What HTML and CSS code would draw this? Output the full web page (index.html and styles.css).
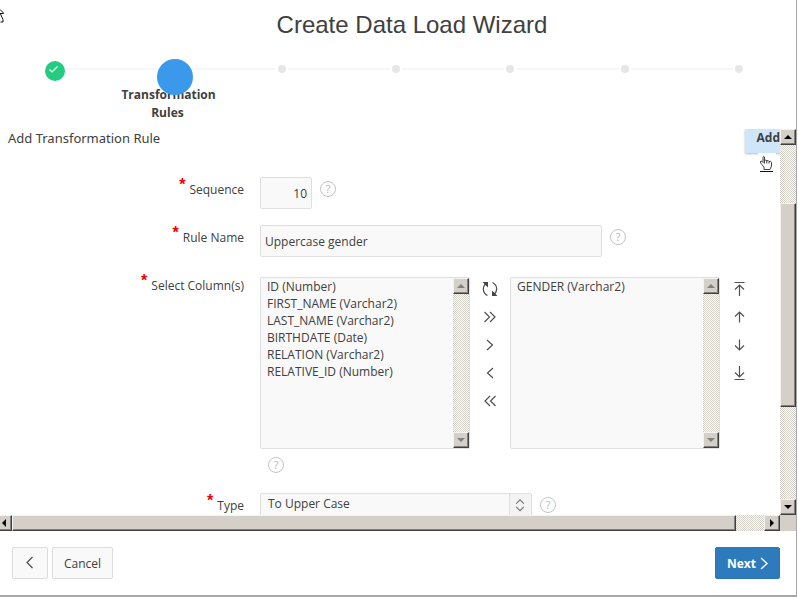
FILE: index.html
```html
<!DOCTYPE html>
<html lang="en">
<head>
<meta charset="utf-8">
<title>Create Data Load Wizard</title>
<link rel="stylesheet" href="styles.css">
</head>
<body>
<svg class="pointer-arrow" width="5" height="16" viewBox="0 0 5 16" fill="none" stroke="#111" aria-hidden="true"><path d="M0 1.5 L3.5 5 V5.5 H0 M0.5 6 L3 11.5 V14 H0.5"/></svg>
<div class="dialog">
  <header class="head">
    <h1>Create Data Load Wizard</h1>
    <ol class="steps">
      <li class="step done"><span class="marker"><svg width="20" height="20" viewBox="0 0 20 20" fill="none" stroke="#fff" stroke-width="1.2"><path d="M4.500 8.500 L7 11 L12.500 5.500"/></svg></span></li>
      <li class="step current"><span class="marker"></span><span class="step-name">Transformation Rules</span></li>
      <li class="step"><span class="marker"></span></li>
      <li class="step"><span class="marker"></span></li>
      <li class="step"><span class="marker"></span></li>
      <li class="step"><span class="marker"></span></li>
      <li class="step"><span class="marker"></span></li>
    </ol>
  </header>

  <main class="pane">
    <div class="content">
      <div class="region-head">
        <h2>Add Transformation Rule</h2>
        <button class="add" type="button">Add</button>
      </div>
      <svg class="pointer-hand" width="18" height="20" viewBox="0 0 18 20" aria-hidden="true"><path fill="#fff" d="M0 0H18V20H0z"/><path fill="#fff" stroke="#444" d="M6 16.500 V14 L3 10.500 Q1.500 8.500 3 8 Q4 8 5 9.500 V4 Q5.700 2.500 6.500 4 V8 Q8 5.800 8.800 8 Q10.200 6.500 11 8.500 Q13 7.500 13.500 9.500 V13 L12 16.500 z M6.500 8 V10.500 M8.800 8 V10.500 M11 8.500 V10.500"/><path stroke="#111" d="M2 18.500 H15"/></svg>
      <form class="form">
        <label class="name" for="seq"><b>*</b>Sequence</label>
        <div class="field">
          <input class="box seq" id="seq" type="text" value="10">
          <button class="help" type="button" aria-label="Help">?</button>
        </div>

        <label class="name" for="rule"><b>*</b>Rule Name</label>
        <div class="field">
          <input class="box rule" id="rule" type="text" value="Uppercase gender">
          <button class="help" type="button" aria-label="Help">?</button>
        </div>

        <label class="name" for="cols"><b>*</b>Select Column(s)</label>
        <div class="field shuttle">
          <div class="list">
            <select id="cols" multiple size="10">
              <option>ID (Number)</option>
              <option>FIRST_NAME (Varchar2)</option>
              <option>LAST_NAME (Varchar2)</option>
              <option>BIRTHDATE (Date)</option>
              <option>RELATION (Varchar2)</option>
              <option>RELATIVE_ID (Number)</option>
            </select>
            <div class="bar vertical disabled"><span class="knob up"></span><span class="track"></span><span class="knob down"></span></div>
          </div>
          <div class="tools">
            <button type="button" aria-label="Reset"><svg viewBox="0 0 16 16"><path d="M5.500 14.500 C0.500 12 0 6 4 2.500 M10.500 1.500 C15.500 4 16 10 12 13.500"/><path class="solid" d="M0.500 1 H6 V6.500z M15.500 15 H10 V9.500z"/></svg></button>
            <button type="button" aria-label="Move all"><svg viewBox="0 0 16 16"><path d="M2.500 3 L7.500 8 L2.500 13 M8 3 L13 8 L8 13"/></svg></button>
            <button type="button" aria-label="Move"><svg viewBox="0 0 16 16"><path d="M5 3 L10.500 8 L5 13"/></svg></button>
            <button type="button" aria-label="Remove"><svg viewBox="0 0 16 16"><path d="M11 3 L5.500 8 L11 13"/></svg></button>
            <button type="button" aria-label="Remove all"><svg viewBox="0 0 16 16"><path d="M8 3 L3 8 L8 13 M13.500 3 L8.500 8 L13.500 13"/></svg></button>
          </div>
          <div class="list">
            <select multiple size="10" aria-label="Selected columns">
              <option>GENDER (Varchar2)</option>
            </select>
            <div class="bar vertical disabled"><span class="knob up"></span><span class="track"></span><span class="knob down"></span></div>
          </div>
          <div class="tools">
            <button type="button" aria-label="Top"><svg viewBox="0 0 16 16"><path d="M2.500 1.500 H12.500 M7.500 15 V4.500 M3 8.500 L7.500 4 L12 8.500"/></svg></button>
            <button type="button" aria-label="Up"><svg viewBox="0 0 16 16"><path d="M7.500 13.500 V3 M3 7.500 L7.500 3 L12 7.500"/></svg></button>
            <button type="button" aria-label="Down"><svg viewBox="0 0 16 16"><path d="M7.500 2.500 V13 M3 8.500 L7.500 13 L12 8.500"/></svg></button>
            <button type="button" aria-label="Bottom"><svg viewBox="0 0 16 16"><path d="M7.500 1 V11.500 M3 7.500 L7.500 12 L12 7.500 M2.500 14.500 H12.500"/></svg></button>
          </div>
          <button class="help below" type="button" aria-label="Help">?</button>
        </div>

        <label class="name type-name" for="type"><b>*</b>Type</label>
        <div class="field type-field">
          <div class="picker">
            <select id="type"><option>To Upper Case</option></select>
            <svg width="22" height="22" viewBox="0 0 22 22" fill="none" stroke="#777" stroke-width="1.200"><path d="M6.500 9.500 L10.500 5.500 L14.500 9.500 M6.500 13 L10.500 17 L14.500 13"/></svg>
          </div>
          <button class="help" type="button" aria-label="Help">?</button>
        </div>
      </form>
    </div>
    <div class="bar vertical"><span class="knob up"></span><span class="track before"></span><span class="thumb"></span><span class="track after"></span><span class="knob down"></span></div>
    <div class="bar horizontal"><span class="knob left"></span><span class="thumb"></span><span class="track"></span><span class="knob right"></span></div>
    <div class="corner"></div>
  </main>

  <footer class="foot">
    <button class="btn back" type="button" aria-label="Previous"><svg width="16" height="16" viewBox="0 0 16 16"><path d="M10.500 2 L5 7.500 L10.500 13"/></svg></button>
    <button class="btn" type="button">Cancel</button>
    <button class="btn next" type="button">Next<svg width="8" height="14" viewBox="0 0 8 14"><path d="M1 1 L7 6.500 L1 12"/></svg></button>
  </footer>
</div>
</body>
</html>
```
FILE: styles.css
```css
* { box-sizing: border-box; }

body {
  margin: 0;
  background: #fff;
  color: #404040;
  font: 12px/16px "Open Sans", "Noto Sans", sans-serif;
}

button, input, select { font: inherit; color: inherit; margin: 0; }

.dialog {
  display: flex;
  flex-direction: column;
  height: 100vh;
  margin-right: 1px;
  border: solid #a8a8a8;
  border-width: 0 1px 2px 0;
  overflow: hidden;
}

.head { flex: none; height: 129px; }

h1 {
  margin: 0;
  padding: 9px 0 0 28px;
  font: 24px/32px "Liberation Sans", sans-serif;
  text-align: center;
}

.steps {
  display: grid;
  grid-template-columns: repeat(7, 1fr);
  margin: 20px 0 0 -4px;
  padding: 0;
  list-style: none;
}

.step { position: relative; height: 64px; padding-top: 25px; text-align: center; }

.step + .step::before {
  content: "";
  position: absolute;
  top: 7px;
  left: calc(-50% + 6px);
  right: calc(50% + 6px);
  height: 2px;
  background: #f7f7f7;
}

.marker {
  position: absolute;
  z-index: 1;
  top: 4px;
  left: calc(50% - 4px);
  width: 8px;
  height: 8px;
  border-radius: 50%;
  background: #e6e6e6;
}

.done .marker { top: 0; left: calc(50% - 8px); width: 20px; height: 20px; background: #25cb80; }
.done svg { display: block; }
.current .marker { top: -2px; left: calc(50% - 10px); width: 36px; height: 36px; background: #3a99ea; }
.step-name { display: block; width: 92px; margin: 0 auto; font-weight: 700; line-height: 18px; }

.pane {
  flex: 1;
  min-height: 0;
  display: grid;
  grid-template: minmax(0, 1fr) 16px / minmax(0, 1fr) 16px;
}

.content { position: relative; overflow: hidden; }

.region-head { display: flex; justify-content: space-between; height: 24px; padding-left: 8px; }
h2 { margin: 0; font: 400 13px/18px "Noto Sans", sans-serif; }

.add {
  padding: 0 0 6px 12px;
  border: 0;
  background: #cfe5fa;
  box-shadow: 0 1px 2px #bbb;
  font-weight: 700;
}

.form {
  display: grid;
  grid-template-columns: 244px minmax(0, 1fr);
  column-gap: 16px;
  row-gap: 16px;
  padding-top: 24px;
}

.name { padding-top: 5px; text-align: right; }
.type-name { padding-top: 9px; }

.name b {
  margin-right: 4px;
  color: #f00000;
  font: 700 16px/1 "Liberation Sans", sans-serif;
  line-height: 0;
  vertical-align: 4px;
}

.field { display: flex; align-items: flex-start; gap: 8px; }

.box {
  height: 32px;
  padding: 1px 4px 0;
  border: 1px solid #dfdfdf;
  border-radius: 2px;
  background: #f9f9f9;
}

.seq { width: 52px; text-align: right; }
.rule { width: 342px; }

.help {
  flex: none;
  width: 16px;
  height: 16px;
  margin-top: 4px;
  padding: 0;
  border: 1px solid #c4c4c4;
  border-radius: 50%;
  background: none;
  color: #b4b4b4;
  font-size: 11px;
  line-height: 14px;
}

.shuttle { flex-wrap: wrap; gap: 0; padding-top: 4px; }

.list {
  display: flex;
  width: 210px;
  height: 172px;
  border: 1px solid #dfdfdf;
  border-radius: 2px;
  background: #f9f9f9;
}

.list select {
  flex: 1;
  min-width: 0;
  padding: 0;
  border: 0;
  outline: 0;
  background: none;
  overflow: hidden;
}

.list option { min-height: 17px; padding: 0 6px; line-height: 17px; }

.tools { display: flex; flex-direction: column; width: 40px; padding-top: 4px; }

.tools button {
  display: flex;
  align-items: center;
  justify-content: center;
  height: 16px;
  margin-bottom: 12px;
  padding: 0;
  border: 0;
  background: none;
}

.tools svg, .btn svg { fill: none; stroke: #505050; stroke-width: 1.2; }
.tools svg { width: 16px; height: 16px; }
.tools .solid { fill: #454545; stroke: none; }

.help.below { margin: 8px 100% 0 8px; }

.type-field { margin-top: 4px; }

.picker { position: relative; width: 272px; }

.picker select {
  appearance: none;
  display: block;
  width: 100%;
  height: 32px;
  padding: 0 24px 10px 7px;
  border: 1px solid #dfdfdf;
  border-radius: 2px;
  background: #f9f9f9;
}

.picker svg {
  position: absolute;
  top: 1px;
  right: 1px;
  border-left: 1px solid #dfdfdf;
  background: #f3f3f3;
  pointer-events: none;
}

.bar { display: flex; min-width: 0; min-height: 0; }
.vertical { flex-direction: column; width: 16px; }
.horizontal { margin-left: -4px; }

.track {
  flex: 1;
  background: repeating-conic-gradient(#d4d0c8 0 25%, #fff 0 50%) 0 0 / 2px 2px;
}
.before { flex: 58; }
.vertical .thumb { flex: 203; }
.after { flex: 93; }
.horizontal .thumb { flex: 724; }
.horizontal .track { flex: 28; }

.thumb, .knob {
  border: 1px solid;
  border-color: #f4f2ee #404040 #404040 #f4f2ee;
  background: #d4d0c8;
  box-shadow: inset -1px -1px #808080;
}

.knob { flex: none; display: grid; place-items: center; width: 16px; height: 16px; }

.knob::before { content: ""; width: 8px; height: 4px; background: #000; }
.disabled .knob::before { background: #808080; }
.up::before { clip-path: polygon(50% 0, 100% 100%, 0 100%); }
.down::before { clip-path: polygon(0 0, 100% 0, 50% 100%); }
.left::before, .right::before { width: 4px; height: 8px; }
.left::before { clip-path: polygon(0 50%, 100% 0, 100% 100%); }
.right::before { clip-path: polygon(0 0, 100% 50%, 0 100%); }

.corner { background: #d4d0c8; }

.foot { flex: none; display: flex; gap: 4px; padding: 16px 16px 16px 12px; }

.btn {
  display: flex;
  align-items: center;
  justify-content: center;
  height: 32px;
  padding: 1px 11px 0;
  border: 1px solid #dcdcdc;
  border-radius: 2px;
  background: #f9f9f9;
}

.back { width: 36px; padding: 0; }

.next {
  gap: 4px;
  margin-left: auto;
  border-color: #2b77b8;
  background: #2d7bbd;
  color: #fff;
  font-weight: 700;
}
.btn.next svg { stroke: #fff; stroke-width: 1.4; }

.pointer-arrow { position: absolute; top: 8px; left: 0; }
.pointer-hand { position: absolute; top: 24px; right: 4px; }
```
